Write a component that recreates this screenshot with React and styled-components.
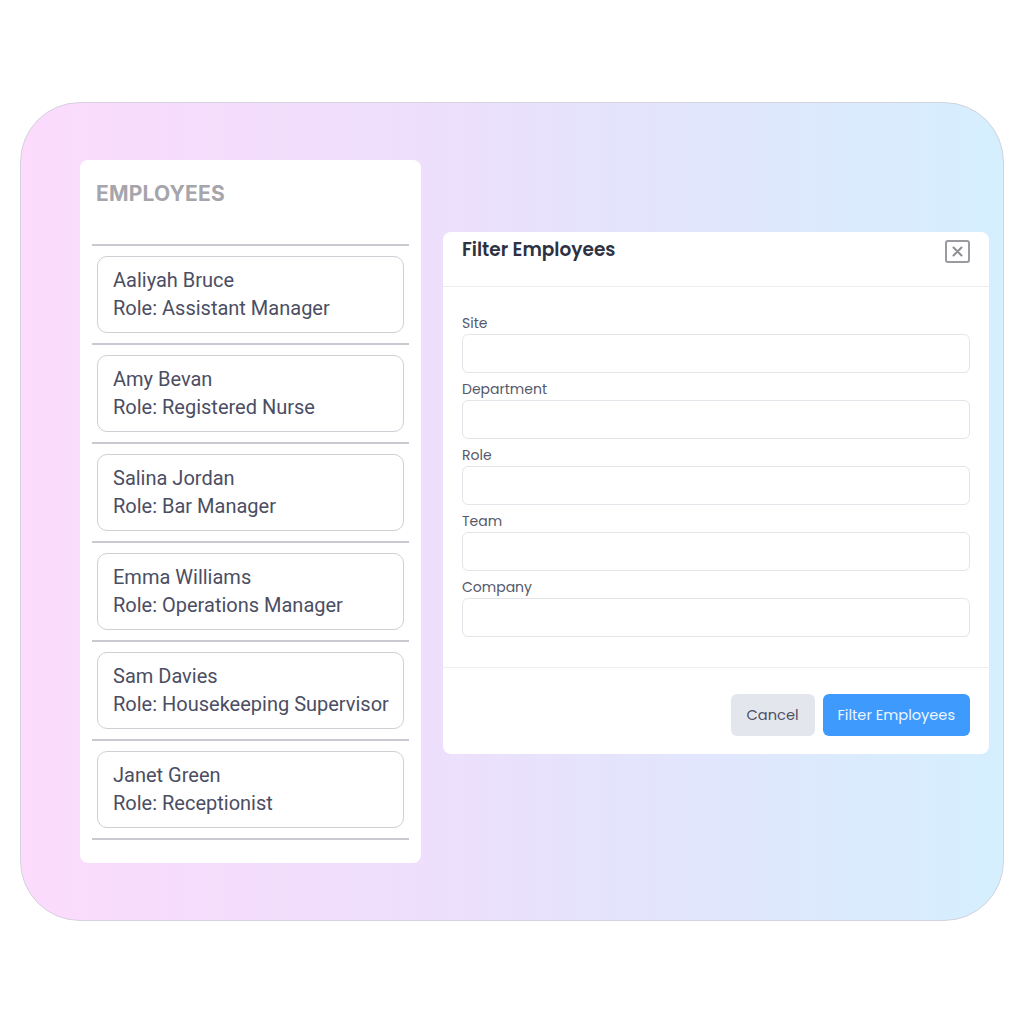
import React from "react";
import styled, { createGlobalStyle } from "styled-components";

const Global = createGlobalStyle`
  html, body { margin: 0; padding: 0; background: #ffffff; }
  body { width: 1024px; height: 1024px; font-family: "Inter", sans-serif; }
  * { box-sizing: border-box; }
`;

const Page = styled.div`
  width: 1024px;
  height: 1024px;
  padding: 102px 20px 103px 20px;
`;

const Stage = styled.div`
  height: 100%;
  border: 1px solid #d4d2dc;
  border-radius: 60px;
  background: linear-gradient(90deg, #fcdbfd 0%, #eedffc 40%, #e1e6fd 70%, #d5effe 100%);
  display: flex;
  align-items: flex-start;
  padding: 57px 14px 0 59px;
  gap: 22px;
`;

const ListPanel = styled.section`
  width: 341px;
  height: 703px;
  background: #ffffff;
  border-radius: 8px;
  padding: 20px 12px 0 12px;
  display: flex;
  flex-direction: column;
`;

const ListTitle = styled.h2`
  margin: 0 0 0 4px;
  font-family: "Inter", sans-serif;
  font-weight: 700;
  font-size: 21px;
  line-height: 28px;
  letter-spacing: 0.2px;
  color: #a5a5ab;
`;

const Divider = styled.div`
  height: 2px;
  background: #c9c9d1;
  margin: ${(p) => p.$top || 0}px 0 0 0;
`;

const EmployeeCard = styled.div`
  margin: 10px 5px 10px 5px;
  height: 77px;
  border: 1px solid #cfcfd6;
  border-radius: 10px;
  padding: 9px 15px 0 15px;
  color: #4b4e63;
  font-family: "Roboto", sans-serif;
  font-size: 20px;
  line-height: 28px;
  white-space: nowrap;
`;

const Modal = styled.section`
  margin-top: 72px;
  width: 546px;
  height: 522px;
  background: #ffffff;
  border-radius: 8px;
  display: flex;
  flex-direction: column;
  font-family: "Poppins", "Inter", sans-serif;
`;

const ModalHeader = styled.header`
  height: 55px;
  border-bottom: 1px solid #ececf1;
  display: flex;
  align-items: flex-start;
  justify-content: space-between;
  padding: 7px 19px 0 19px;
`;

const ModalTitle = styled.h3`
  margin: 0;
  font-size: 18.5px;
  line-height: 22px;
  font-weight: 600;
  color: #2e3142;
`;

const CloseButton = styled.button`
  width: 25px;
  height: 23px;
  margin-top: 1px;
  border: 2px solid #9a9aa0;
  border-radius: 3px;
  background: #fff;
  padding: 0;
  display: flex;
  align-items: center;
  justify-content: center;
`;

const ModalBody = styled.div`
  flex: 1;
  padding: 28px 19px 0 19px;
  display: flex;
  flex-direction: column;
  border-bottom: 1px solid #ececf1;
`;

const Field = styled.div`
  display: flex;
  flex-direction: column;
  margin-bottom: 8px;
`;

const Label = styled.label`
  font-size: 14px;
  line-height: 17px;
  color: #55586a;
  margin-bottom: 2px;
`;

const Input = styled.input`
  height: 39px;
  width: 100%;
  border: 1px solid #e4e5ea;
  border-radius: 6px;
  background: #fff;
  outline: none;
`;

const ModalFooter = styled.footer`
  height: 86px;
  display: flex;
  justify-content: flex-end;
  align-items: flex-start;
  gap: 8px;
  padding: 26px 19px 0 19px;
`;

const Button = styled.button`
  height: 42px;
  padding: 0 ${(p) => (p.$primary ? 15 : 16)}px;
  border: none;
  border-radius: 6px;
  font-family: "Poppins", "Inter", sans-serif;
  font-size: 14.6px;
  background: ${(p) => (p.$primary ? "#3e9bfd" : "#e4e6ee")};
  color: ${(p) => (p.$primary ? "#eef5ff" : "#4e5060")};
`;

const employees = [
  ["Aaliyah Bruce", "Assistant Manager"],
  ["Amy Bevan", "Registered Nurse"],
  ["Salina Jordan", "Bar Manager"],
  ["Emma Williams", "Operations Manager"],
  ["Sam Davies", "Housekeeping Supervisor"],
  ["Janet Green", "Receptionist"],
];

const fields = ["Site", "Department", "Role", "Team", "Company"];

export default function App() {
  return (
    <>
      <Global />
      <Page>
        <Stage>
          <ListPanel>
            <ListTitle>EMPLOYEES</ListTitle>
            <Divider $top={36} />
            {employees.map(([name, role]) => (
              <React.Fragment key={name}>
                <EmployeeCard>
                  <div>{name}</div>
                  <div>Role: {role}</div>
                </EmployeeCard>
                <Divider />
              </React.Fragment>
            ))}
          </ListPanel>
          <Modal>
            <ModalHeader>
              <ModalTitle>Filter Employees</ModalTitle>
              <CloseButton aria-label="Close">
                <svg width="11" height="11" viewBox="0 0 11 11">
                  <path d="M1.5 1.5 L9.5 9.5 M9.5 1.5 L1.5 9.5" stroke="#8e8e95" strokeWidth="2" strokeLinecap="round" />
                </svg>
              </CloseButton>
            </ModalHeader>
            <ModalBody>
              {fields.map((f) => (
                <Field key={f}>
                  <Label>{f}</Label>
                  <Input />
                </Field>
              ))}
            </ModalBody>
            <ModalFooter>
              <Button>Cancel</Button>
              <Button $primary>Filter Employees</Button>
            </ModalFooter>
          </Modal>
        </Stage>
      </Page>
    </>
  );
}
